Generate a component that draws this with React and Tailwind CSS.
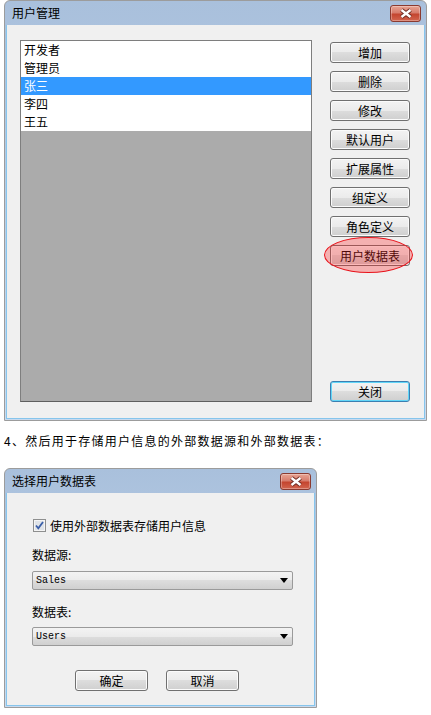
import React from 'react';

const ui = { fontFamily: '"Noto Sans CJK SC", "Noto Sans", sans-serif' };

const btn =
  'flex items-center justify-center rounded-[3px] border border-[#707070] bg-[linear-gradient(to_bottom,#f3f3f3_0%,#ebebeb_50%,#dddddd_50%,#cfcfcf_100%)] shadow-[inset_0_0_0_1px_#fbfbfb] text-[12px] leading-none text-black';

const CloseX = () => (
  <div className="flex h-[17px] w-[31px] items-center justify-center rounded-[3px] border border-[#8a3a30] bg-[linear-gradient(to_bottom,#e8a493_0%,#d77c6c_45%,#c4452f_55%,#d2654f_100%)] shadow-[inset_0_0_0_1px_rgba(255,255,255,0.3)]">
    <svg width="14" height="11" viewBox="0 0 14 11">
      <path d="M2.5 2 L11.5 9 M11.5 2 L2.5 9" stroke="#6e2b22" strokeWidth="4.2" />
      <path d="M2.5 2 L11.5 9 M11.5 2 L2.5 9" stroke="#ffffff" strokeWidth="2.4" />
    </svg>
  </div>
);

const TitleBar = ({ title }) => (
  <div className="flex h-[24px] shrink-0 items-center justify-between pl-[6px] pr-[4px]">
    <span className="text-[12px] leading-none text-black">{title}</span>
    <CloseX />
  </div>
);

const Dropdown = ({ value }) => (
  <div className="flex h-[19px] w-[261px] items-center justify-between rounded-[2px] border border-[#9a9a9a] bg-[linear-gradient(to_bottom,#f3f3f3_0%,#ebebeb_50%,#dddddd_50%,#d0d0d0_100%)] pl-[3px] pr-[4px]">
    <span className="text-[10px] leading-none text-black" style={{ fontFamily: '"Liberation Mono", monospace' }}>
      {value}
    </span>
    <svg width="8" height="5" viewBox="0 0 8 5">
      <path d="M0 0 H8 L4 5 Z" fill="#000" />
    </svg>
  </div>
);

const users = ['开发者', '管理员', '张三', '李四', '王五'];
const actions = ['增加', '删除', '修改', '默认用户', '扩展属性', '组定义', '角色定义'];

export default function App() {
  return (
    <div className="min-h-[715px] w-[431px] bg-white pt-0" style={ui}>
      {/* 用户管理 */}
      <div className="ml-[4px] flex h-[421px] w-[423px] flex-col rounded-t-[6px] border border-[#9c9c9c] bg-gradient-to-b from-[#a9c0dc] to-[#c8daef] px-[1px] pb-[1px]">
        <TitleBar title="用户管理" />
        <div className="flex flex-1 gap-[18px] border border-t-0 border-[#86c5ec] bg-[#f0f0f0] pl-[13px] pt-[15px]">
          <div className="flex h-[362px] w-[292px] flex-col border border-[#7e7e7e] border-b-[#5f5f5f] bg-[#ababab]">
            <div className="bg-white">
              {users.map((u, i) => (
                <div
                  key={u}
                  className={
                    'h-[18px] pl-[3px] text-[12px] leading-[18px] ' +
                    (i === 2 ? 'bg-[#3399ff] text-white' : 'text-black')
                  }
                >
                  {u}
                </div>
              ))}
            </div>
          </div>
          <div className="flex h-[362px] w-[80px] flex-col justify-between">
            <div className="mt-[2px] flex flex-col gap-[8px]">
              {actions.map((a) => (
                <div key={a} className={btn + ' h-[21px]'}>
                  {a}
                </div>
              ))}
              <div className="relative">
                <div className={btn + ' h-[21px]'}>用户数据表</div>
                <div className="absolute left-[-6px] top-[-8px] h-[36px] w-[89px] rounded-[50%] border border-[#e8131b] bg-[#ff2020]/30" />
              </div>
            </div>
            <div className="flex h-[21px] items-center justify-center rounded-[3px] border border-[#3c7fb1] bg-[linear-gradient(to_bottom,#f3f3f3_0%,#ebebeb_50%,#dddddd_50%,#cfcfcf_100%)] text-[12px] leading-none text-black shadow-[inset_0_0_0_1px_#62d6f8]">
              关闭
            </div>
          </div>
        </div>
      </div>

      <p className="ml-[4px] mt-[13px] text-[12px] leading-[14px] tracking-[1.25px] text-black">
        4、然后用于存储用户信息的外部数据源和外部数据表：
      </p>

      {/* 选择用户数据表 */}
      <div className="ml-[4px] mt-[20px] flex h-[240px] w-[313px] flex-col rounded-t-[6px] border border-[#9c9c9c] bg-gradient-to-b from-[#a9c0dc] to-[#c8daef] px-[1px] pb-[1px]">
        <TitleBar title="选择用户数据表" />
        <div className="flex flex-1 flex-col border border-t-0 border-[#86c5ec] bg-[#f0f0f0] pl-[25px]">
          <div className="ml-[1px] mt-[26px] flex items-center gap-[4px]">
            <svg width="13" height="13" viewBox="0 0 13 13">
              <rect x="0.5" y="0.5" width="12" height="12" fill="#f4f4f4" stroke="#8e8f8f" />
              <rect x="2" y="2" width="9" height="9" fill="#dfe3e8" />
              <path d="M3 6.5 L5.3 9.3 L10 3" fill="none" stroke="#3a5ea8" strokeWidth="1.8" />
            </svg>
            <span className="text-[12px] leading-[13px] text-black">使用外部数据表存储用户信息</span>
          </div>
          <div className="mt-[16px] text-[12px] leading-[14px] text-black">数据源:</div>
          <div className="mt-[9px]">
            <Dropdown value="Sales" />
          </div>
          <div className="mt-[15px] text-[12px] leading-[14px] text-black">数据表:</div>
          <div className="mt-[8px]">
            <Dropdown value="Users" />
          </div>
          <div className="ml-[43px] mt-[24px] flex gap-[18px]">
            <div className={btn + ' h-[21px] w-[73px]'}>确定</div>
            <div className={btn + ' h-[21px] w-[73px]'}>取消</div>
          </div>
        </div>
      </div>
    </div>
  );
}
